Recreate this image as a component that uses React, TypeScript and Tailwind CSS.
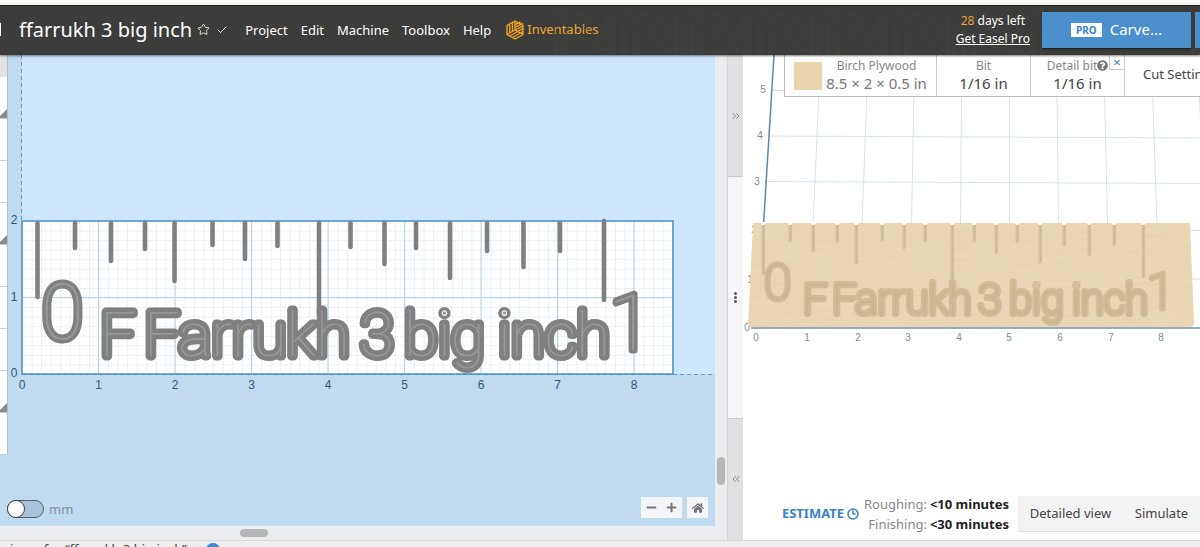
import React from "react"
import clsx from "clsx"
import { Check, ChevronsLeft, ChevronsRight, Clock3, Star } from "lucide-react"
import { FaHome, FaMinus, FaPlus, FaQuestionCircle } from "react-icons/fa"

const INCH = 76.5
const BOARD = { x: 22, y: 166, width: 651, height: 153 }

// x, length below the top edge of the board
const TICKS = [
  [15.5, 76],
  [53, 27],
  [89, 40],
  [123, 28],
  [152.5, 60],
  [190.5, 24],
  [223, 38],
  [255.5, 25],
  [297, 93],
  [328.5, 26],
  [362.5, 43],
  [394, 27],
  [428, 57],
  [465, 30],
  [501.5, 46],
  [538, 30],
]

const WORDS = [
  { text: "F", x: 78 },
  { text: "Farrukh", x: 122 },
  { text: "3", x: 338 },
  { text: "big", x: 382 },
  { text: "inch", x: 476 },
]

const GROOVES = [
  [20, 51],
  [47, 18],
  [70, 28],
  [94, 19],
  [113, 40],
  [139, 17],
  [161, 25],
  [182, 18],
  [209, 57],
  [231, 18],
  [253, 30],
  [274, 19],
  [297, 39],
  [321, 22],
  [346, 32],
  [371, 22],
  [400, 54],
]

const CARVED = [
  { text: "F", x: 60 },
  { text: "Farrukh", x: 89 },
  { text: "3", x: 235 },
  { text: "big", x: 266 },
  { text: "inch", x: 329 },
]

const MENU = ["Project", "Edit", "Machine", "Toolbox", "Help"]

export default function App() {
  return (
    <div className="flex h-screen flex-col overflow-hidden bg-[#f7f7f3] pt-[5px] font-['Noto_Sans',sans-serif] text-[13px] text-[#444]">
      <Header />
      <main className="grid min-h-0 flex-1 grid-cols-[715fr_13px_15px_457fr] bg-[#ebecef]">
        <Workspace />
        <div className="flex flex-col justify-end border-r border-[#d5d6d8] px-[2px] pb-[55px]">
          <div className="h-7 rounded-full bg-[#b6b7b9]" />
        </div>
        <Splitter />
        <Preview />
      </main>
      <footer className="flex h-[7px] shrink-0 gap-2 overflow-hidden border-t border-[#d8d8d8] bg-[#eee] text-[13px] leading-4">
        <span className="-ml-[30px] whitespace-nowrap">
          Workpieces for “ffarrukh 3 big inch” +
        </span>
        <span className="mt-[2px] size-[14px] shrink-0 rounded-full bg-[#3d85cc]" />
      </footer>
    </div>
  )
}

function Header() {
  return (
    <header className="relative z-10 flex h-[50px] shrink-0 items-center overflow-hidden border-t border-[#222] bg-[#3c3c3a] pb-[2px] text-white shadow-[0_1px_2px_rgba(0,0,0,0.5)]">
      <HeaderTexture />
      <span className="h-[13px] w-px bg-white" />
      <h1 className="ml-[18px] whitespace-nowrap text-[20px] leading-6">
        ffarrukh 3 big inch
      </h1>
      <button className="ml-[5px]" aria-label="Favourite">
        <Star size={13} strokeWidth={1.5} />
      </button>
      <Check className="ml-[6px]" size={12} strokeWidth={2} />
      <nav className="ml-[17px] flex items-center gap-[13px] whitespace-nowrap">
        {MENU.map((item) => (
          <button key={item} className="leading-5">
            {item}
          </button>
        ))}
        <a href="#inventables" className="ml-[2px] flex items-center gap-[3px] text-[#f0a734]">
          <InventablesLogo />
          Inventables
        </a>
      </nav>
      <div className="relative ml-auto whitespace-nowrap text-center text-[12px] leading-[18px]">
        <div>
          <span className="text-[#e5a33a]">28</span> days left
        </div>
        <a href="#pro" className="underline">
          Get Easel Pro
        </a>
      </div>
      <button className="relative ml-3 flex h-9 w-[149px] shrink-0 items-center justify-center gap-2 bg-[#4b90cd] text-[15px] shadow-[0_1px_1px_rgba(0,0,0,0.5)]">
        <span className="bg-white px-[5px] text-[10px] font-bold leading-[14px] text-[#3d85cc]">
          PRO
        </span>
        Carve...
      </button>
      <button className="relative ml-1 h-9 w-[5px] shrink-0 bg-[#4b90cd]" aria-label="More" />
    </header>
  )
}

function HeaderTexture() {
  return (
    <svg className="absolute inset-0 size-full" aria-hidden="true">
      <defs>
        <pattern id="chevrons" width="68" height="50" patternUnits="userSpaceOnUse">
          <path
            d="M2 50V14L26 0M12 50V20L34 7M22 50V26M34 7L60 22M34 18L60 33M34 29L60 44M64 50V10"
            fill="none"
            stroke="#454543"
            strokeWidth="4"
          />
        </pattern>
      </defs>
      <rect x="46%" width="41%" height="100%" fill="url(#chevrons)" opacity="0.25" />
    </svg>
  )
}

function InventablesLogo() {
  return (
    <svg width="18" height="20" viewBox="0 0 18 20" fill="none" stroke="#f0a11e" strokeWidth="1.4">
      <path d="M9 1L17 5.5V14.5L9 19L1 14.5V5.5Z" />
      <path d="M3.7 4.5V13M6.4 3V11.5M9 1.5V10M1 14.5L9 10L17 14.5" />
      <path d="M9 4.6L14.5 2M9 7.4L17 3.4M9 10L17 5.8M11.5 11.4L17 8.4M14.2 13L17 11.4" />
      <path d="M3.6 16L11.7 11.5M6.4 17.5L14.3 13" />
    </svg>
  )
}

function Workspace() {
  const [metric, setMetric] = React.useState(false)

  return (
    <section className="flex min-w-0 flex-col">
      <div className="relative flex min-h-0 flex-1 justify-between overflow-hidden">
        <Canvas />
        <aside className="relative w-2 self-start border-r border-[#aebfcf] bg-white">
          <div className="h-[22px] bg-[#e1e1e1]" />
          {Array.from({ length: 9 }, (_, i) => (
            <div key={i} className="flex h-[42px] items-end justify-end border-b border-[#ccc]">
              {[0, 3, 7].includes(i) && (
                <svg width="7" height="9" viewBox="0 0 7 9">
                  <path d="M7 0V9H0V7Z" fill="#8c8c8c" />
                </svg>
              )}
            </div>
          ))}
        </aside>
        <div className="relative flex flex-1 items-end justify-between pr-[7px] pb-2">
          <label className="-ml-px flex items-center gap-[5px] text-[13px] leading-[18px] text-[#7f93a5]">
            <input
              type="checkbox"
              className="peer sr-only"
              checked={metric}
              onChange={(e) => setMetric(e.target.checked)}
            />
            <span
              className={clsx(
                "flex h-[18px] w-[37px] rounded-full border border-[#55606a] bg-[#a8c3dc]",
                metric && "justify-end"
              )}
            >
              <span className="size-4 rounded-full bg-white shadow-[0_0_0_1px_#444]" />
            </span>
            mm
          </label>
          <div className="flex gap-[5px] text-[#777]">
            <div className="flex bg-[#f4f5f6]">
              <button className="flex h-[21px] w-5 items-center justify-center" aria-label="Zoom out">
                <FaMinus size={11} />
              </button>
              <button className="flex h-[21px] w-[21px] items-center justify-center" aria-label="Zoom in">
                <FaPlus size={11} />
              </button>
            </div>
            <button
              className="flex size-[21px] items-center justify-center bg-[#f4f5f6]"
              aria-label="Reset view"
            >
              <FaHome size={12} />
            </button>
          </div>
        </div>
      </div>
      <div className="flex h-[14px] shrink-0 items-center pl-[240px]">
        <div className="h-2 w-7 rounded-full bg-[#b6b6b6]" />
      </div>
    </section>
  )
}

function Canvas() {
  const bottom = BOARD.y + BOARD.height

  return (
    <svg className="absolute inset-0 size-full font-['Liberation_Sans',sans-serif]" role="img" aria-label="Design">
      <defs>
        <pattern id="minor" width={INCH / 8} height={INCH / 8} patternUnits="userSpaceOnUse">
          <path d="M0 0H10M0 0V10" fill="none" stroke="#d3e5f0" />
        </pattern>
      </defs>
      <rect width="100%" height="100%" fill="#c0daf0" />
      <rect x={BOARD.x} width="100%" height={bottom} fill="#cce6fe" />
      <path d={`M${BOARD.x - 0.5} 0V${BOARD.y}`} stroke="#5c9bd3" strokeDasharray="4 3" />
      <line
        x1={BOARD.x}
        x2="100%"
        y1={bottom + 0.5}
        y2={bottom + 0.5}
        stroke="#5c9bd3"
        strokeDasharray="4 3"
      />

      <g transform={`translate(${BOARD.x} ${BOARD.y})`}>
        <rect width={BOARD.width} height={BOARD.height} fill="#fff" />
        <rect width={BOARD.width} height={BOARD.height} fill="url(#minor)" />
        {[1, 2, 3, 4, 5, 6, 7, 8].map((n) => (
          <path key={n} d={`M${n * INCH} 0V${BOARD.height}`} stroke="#b5d4ea" />
        ))}
        <path d={`M0 ${INCH}H${BOARD.width}`} stroke="#b5d4ea" />
        <rect
          width={BOARD.width}
          height={BOARD.height}
          fill="none"
          stroke="#4088c4"
          strokeWidth="1.4"
        />

        <g stroke="#808080" strokeWidth="4.6" strokeLinecap="round">
          {TICKS.map(([x, length]) => (
            <path key={x} d={`M${x} 2V${length}`} />
          ))}
          <path d="M582 0V79" />
        </g>

        <g
          className="font-['Roboto',sans-serif] font-thin"
          fill="#989898"
          stroke="#808080"
          strokeLinejoin="round"
          paintOrder="stroke"
        >
          <g fontSize="62" strokeWidth="9">
            {WORDS.map(({ text, x }) => (
              <text key={x} x={x} y="135">
                {text}
              </text>
            ))}
          </g>
          <g fontSize="78" strokeWidth="7">
            <text x="19" y="118">
              0
            </text>
            <text x="587" y="129">
              1
            </text>
          </g>
        </g>
      </g>

      <g fontSize="12" fill="#33587d" textAnchor="middle">
        {[0, 1, 2, 3, 4, 5, 6, 7, 8].map((n) => (
          <text key={n} x={BOARD.x + n * INCH} y={bottom + 15}>
            {n}
          </text>
        ))}
        {[0, 1, 2].map((n) => (
          <text key={n} x="14" y={bottom + 3 - n * INCH}>
            {n}
          </text>
        ))}
      </g>
    </svg>
  )
}

function Splitter() {
  return (
    <div className="grid grid-rows-[1fr_2fr_1fr] bg-[#e0e1e1] text-[#888]">
      <button className="flex items-center justify-center" aria-label="Hide preview">
        <ChevronsRight size={12} />
      </button>
      <div className="flex flex-col items-center justify-center gap-px border-y border-[#ccc] bg-[#f6f6f6]">
        <span className="size-[3px] rounded-full bg-[#555]" />
        <span className="size-[3px] rounded-full bg-[#555]" />
        <span className="size-[3px] rounded-full bg-[#555]" />
      </div>
      <button className="flex items-center justify-center" aria-label="Hide design">
        <ChevronsLeft size={12} />
      </button>
    </div>
  )
}

function Preview() {
  return (
    <section className="relative flex min-w-0 flex-col justify-between overflow-hidden bg-white">
      <Scene />
      <div className="relative ml-[41px] flex h-[42px] shrink-0 whitespace-nowrap border-b border-l border-[#bbb] bg-white">
        <button className="flex w-[152px] shrink-0 items-center justify-center gap-1 border-r border-[#ccc]">
          <span className="size-7 bg-[#e8d5ad]" />
          <Spec label="Birch Plywood" value="8.5 × 2 × 0.5 in" muted />
        </button>
        <button className="w-[94px] shrink-0 border-r border-[#ccc]">
          <Spec label="Bit" value="1/16 in" />
        </button>
        <div className="relative flex w-[94px] shrink-0 items-center justify-center border-r border-[#ccc]">
          <Spec
            label={
              <span className="flex items-center">
                Detail bit
                <FaQuestionCircle className="text-[#777]" size={11} />
              </span>
            }
            value="1/16 in"
          />
          <button
            className="absolute top-0 right-0 size-[15px] border-b border-l border-[#ccc] text-[13px] leading-[14px] text-[#3d85cc]"
            aria-label="Remove detail bit"
          >
            ×
          </button>
        </div>
        <button className="px-[18px] pb-[2px]">Cut Settings</button>
      </div>

      <div className="relative flex items-center whitespace-nowrap pb-[6px]">
        <button className="ml-auto flex items-center gap-[3px] font-bold text-[#3a82c8]">
          ESTIMATE
          <Clock3 size={12} strokeWidth={3} />
        </button>
        <dl className="ml-[5px] text-[13px] leading-5">
          <Duration label="Roughing:" value="<10 minutes" />
          <Duration label="Finishing:" value="<30 minutes" />
        </dl>
        <div className="ml-[9px] flex h-9 border-b border-[#ddd] bg-[#f3f3f3]">
          <button className="w-[105px]">Detailed view</button>
          <button className="w-[77px]">Simulate</button>
        </div>
      </div>
    </section>
  )
}

interface SpecProps {
  label: React.ReactNode
  value: string
  muted?: boolean
}

function Spec({ label, value, muted }: SpecProps) {
  return (
    <span className="flex flex-col items-center pb-[2px]">
      <span className="text-[12px] leading-4 text-[#888]">{label}</span>
      <span className={clsx("text-[15px] leading-[18px]", muted ? "text-[#777]" : "text-[#444]")}>
        {value}
      </span>
    </span>
  )
}

function Duration({ label, value }: { label: string; value: string }) {
  return (
    <div className="flex justify-end gap-[3px]">
      <dt className="text-[#888]">{label}</dt>
      <dd className="font-bold text-[#222]">{value}</dd>
    </div>
  )
}

// Perspective view of the carved board
function Scene() {
  return (
    <svg className="absolute inset-0 size-full font-['Liberation_Sans',sans-serif]" role="img" aria-label="3D preview">
      <defs>
        <filter id="grain" x="0" y="0" width="100%" height="100%">
          <feTurbulence type="fractalNoise" baseFrequency="0.03 0.25" numOctaves="3" seed="4" />
          <feColorMatrix values="0 0 0 0 0.76  0 0 0 0 0.6  0 0 0 0 0.4  1.6 0 0 0 -0.7" />
          <feComposite in2="SourceGraphic" operator="in" />
        </filter>
      </defs>

      <g stroke="#d3e4f3" fill="none">
        <path d="M29 35.5H457M25 81L457 83M21 126.5L457 128.5M447 175.5H457M449 224H457" />
        <path d="M76 36L70 170M124 36L119 170M171 36L168.5 170M218.5 36L217.5 170M266.5 36V170M314 36L315.5 170M361.5 36L364.5 170M409.5 36L414 170M456 36L463 170" />
      </g>
      <path d="M31 0L20.5 170" stroke="#5f86ad" strokeWidth="1.5" />
      <path d="M8 273H457" stroke="#7590a6" strokeWidth="1.5" />

      <g fontSize="10" fill="#7d8b99" textAnchor="middle">
        {[13, 64, 115, 165, 216, 266, 317, 368, 418].map((x, i) => (
          <text key={x} x={x} y="286">
            {i}
          </text>
        ))}
        <text x="4" y="276">0</text>
        <text x="7" y="228">1</text>
        <text x="11" y="178">2</text>
        <text x="14" y="130">3</text>
        <text x="17" y="84">4</text>
        <text x="20" y="38">5</text>
      </g>

      <path d="M10 168H447L451 269Q451 271 448 272H5Z" fill="#e9d6b3" />
      <path d="M10 168H447L451 269Q451 271 448 272H5Z" fill="#e9d6b3" filter="url(#grain)" opacity="0.5" />
      {GROOVES.map(([x, length]) => (
        <g key={x}>
          <path d={`M${x} 170V${168 + length}`} stroke="#d6c29d" strokeWidth="3" strokeLinecap="round" />
          <path d={`M${x + 1} 170V${168 + length}`} stroke="#bba681" opacity="0.6" />
          <path d={`M${x - 3} 167H${x + 4}L${x + 1} 170H${x - 1}Z`} fill="#fff" />
        </g>
      ))}
      <g
        className="font-['Roboto',sans-serif] font-thin"
        fill="#c8b38e"
        stroke="#d0bb96"
        strokeLinejoin="round"
        strokeWidth="6"
        paintOrder="stroke"
      >
        <g fontSize="42">
          {CARVED.map(({ text, x }) => (
            <text key={x} x={x} y="259">
              {text}
            </text>
          ))}
        </g>
        <g fontSize="50" strokeWidth="5">
          <text x="21" y="245">
            0
          </text>
          <text x="404" y="254">
            1
          </text>
        </g>
      </g>
    </svg>
  )
}
